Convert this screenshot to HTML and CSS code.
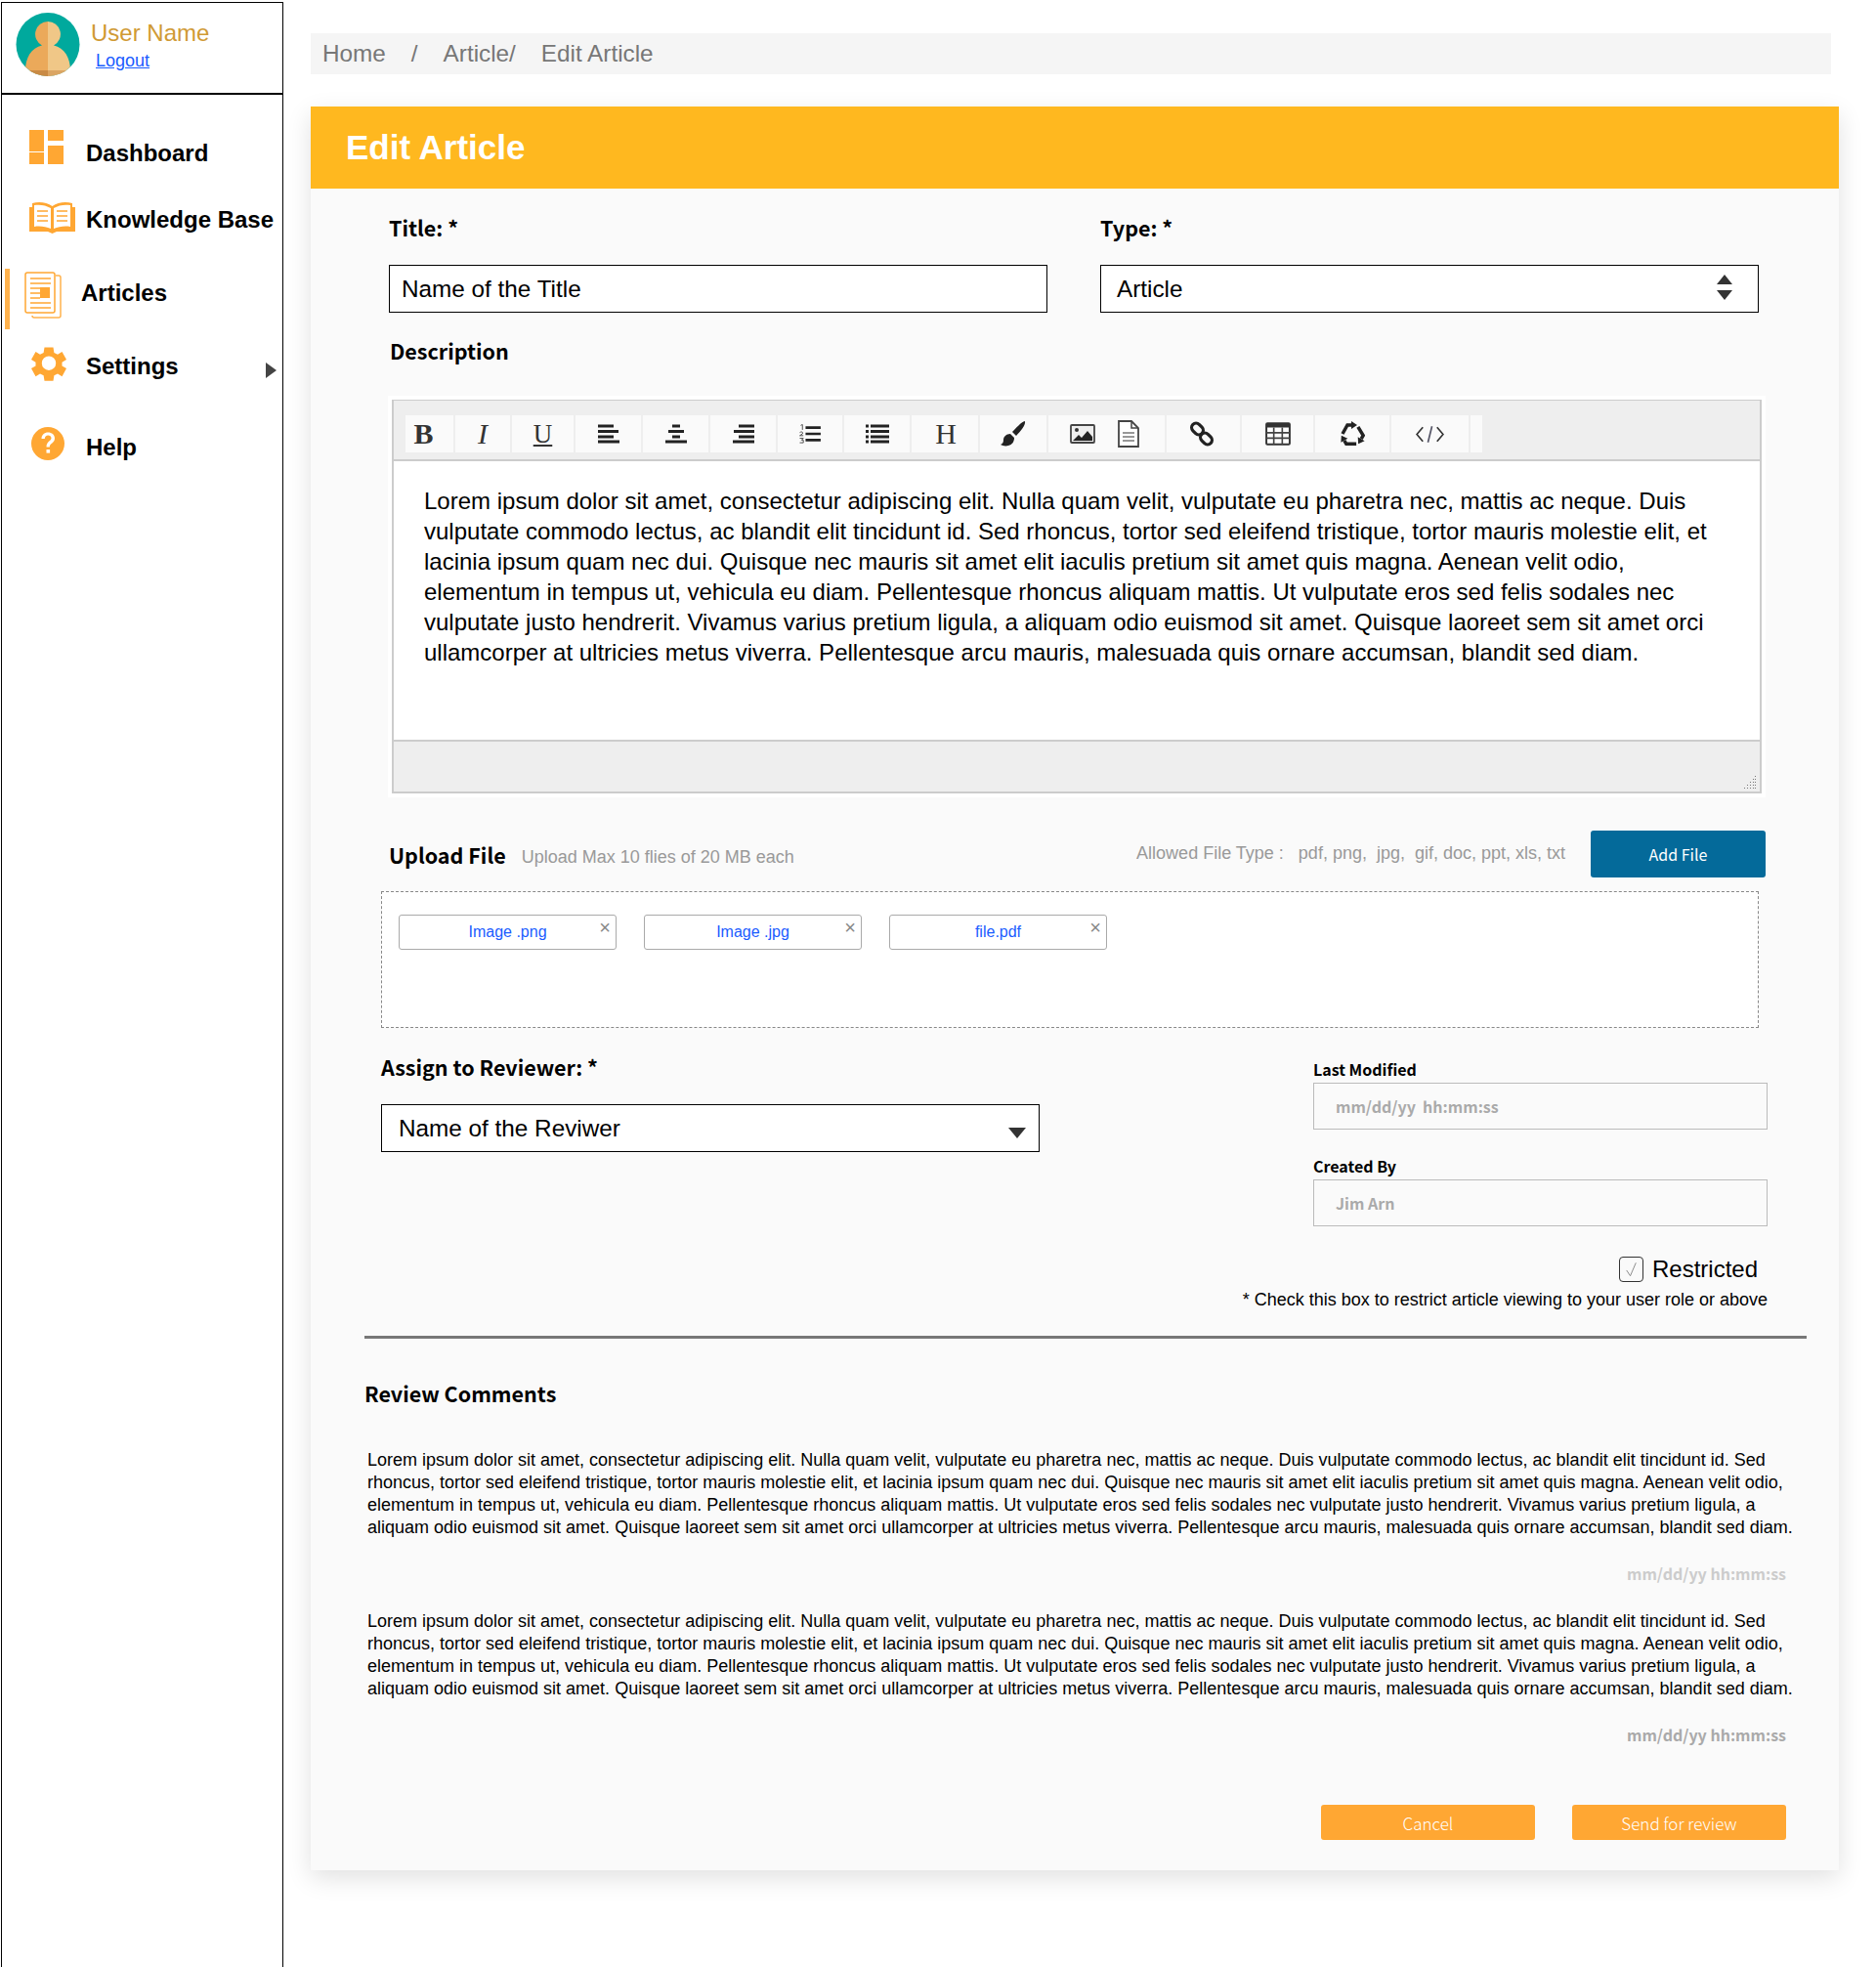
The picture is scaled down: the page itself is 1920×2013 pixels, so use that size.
FILE: index.html
```html
<!DOCTYPE html>
<html lang="en">
<head>
	<meta charset="UTF-8">
	<title>Edit Article</title>
	<link rel="stylesheet" href="styles.css">
</head>
<body>
	<aside class="sidebar">
		<div class="user">
			<svg class="avatar" viewBox="0 0 66 67">
				<defs><clipPath id="round"><circle cx="33" cy="33.5" r="32.5"/></clipPath></defs>
				<g clip-path="url(#round)">
					<rect width="66" height="67" fill="#00a99d"/>
					<path d="M33 10a13 13 0 0 0-6 24.500C16 37 10 47 10 60v7h23z" fill="#eba95a"/>
					<path d="M33 10a13 13 0 0 1 6 24.500C50 37 56 47 56 60v7H33z" fill="#f0c787"/>
					<rect x="8" y="60" width="25" height="7" fill="#c98a45"/>
					<rect x="33" y="60" width="25" height="7" fill="#dba563"/>
				</g>
			</svg>
			<div>
				<div class="user-name">User Name</div>
				<a class="logout" href="#">Logout</a>
			</div>
		</div>
		<nav>
			<a class="nav-item nav-dashboard" href="#">
				<svg class="nav-icon" viewBox="0 0 58 50"><path d="M0 1h15v22H0zM19 1h16v11H19zM19 17h16v19H19zM0 24h15v12H0z" fill="#ffa733"/></svg>
				Dashboard
			</a>
			<a class="nav-item nav-kb" href="#">
				<svg class="nav-icon" viewBox="0 0 58 50">
					<path d="M0 12h3V8c7-2 15-1 20.500 3C29 7 37 6 44 8v4h3v25H28l-4.500 2-4.500-2H0z" fill="#ffa733"/>
					<path d="M5 10c6-1 12 0 17 3v21c-5-2-11-3-17-2zM42 10c-6-1-12 0-17 3v21c5-2 11-3 17-2z" fill="#fff"/>
					<path d="M8 16h11M8 21h11M8 26h11M28 16h11M28 21h11M28 26h11" stroke="#ffa733" stroke-width="1.500"/>
				</svg>
				Knowledge Base
			</a>
			<a class="nav-item nav-articles" href="#">
				<svg class="nav-icon" viewBox="0 0 58 50">
					<path d="M32 7h3a2 2 0 0 1 2 2v39a2 2 0 0 1-2 2H10a2 2 0 0 1-2-2" fill="none" stroke="#ffb24d" stroke-width="1.500"/>
					<rect x="1" y="4" width="30" height="41" rx="2" fill="#fff" stroke="#ffa733" stroke-width="1.500"/>
					<path d="M6 10h21M6 15h21M6 20h10M6 25h10M6 30h10M6 35h21M6 40h21" stroke="#ffa733" stroke-width="1.500"/>
					<rect x="16" y="19" width="10" height="11" fill="#ffa733"/>
				</svg>
				Articles
			</a>
			<a class="nav-item nav-settings" href="#">
				<svg class="nav-icon" viewBox="0 0 58 50">
					<path transform="translate(2 1) scale(.9)" fill="#ffa733" fill-rule="evenodd" d="M15 5h10l1 6 4 2 5-3 5 9-5 3v4l5 3-5 9-5-3-4 2-1 6H15l-1-6-4-2-5 3-5-9 5-3v-4l-5-3 5-9 5 3 4-2zM20 15a8 8 0 1 0 0 16 8 8 0 0 0 0-16z"/>
				</svg>
				Settings
				<span class="nav-arrow"></span>
			</a>
			<a class="nav-item nav-help" href="#">
				<svg class="nav-icon" viewBox="0 0 58 50">
					<circle cx="19" cy="21" r="17" fill="#ffa733"/>
					<path d="M12.500 16c0-4 3-6.500 6.700-6.500s6.800 2.300 6.800 6c0 5-5.200 5-5.200 9h-3.300c0-6 5-6 5-9.200 0-1.600-1.500-2.800-3.300-2.800-1.900 0-3.300 1.200-3.400 3.500z" fill="#fff"/>
					<rect x="17.500" y="27" width="3.600" height="3.600" fill="#fff"/>
				</svg>
				Help
			</a>
		</nav>
	</aside>

	<main class="main">
		<div class="crumbs">
			<span class="crumb-home">Home</span><span class="crumb-sep">/</span><span class="crumb-article">Article/</span><span>Edit Article</span>
		</div>

		<section class="panel">
			<h1 class="panel-title">Edit Article</h1>

			<div class="top-fields">
				<div>
					<label class="label">Title: *</label>
					<div class="field">Name of the Title</div>
				</div>
				<div>
					<label class="label">Type: *</label>
					<div class="field field-type">Article
						<svg class="updown" viewBox="0 0 18 28"><path d="M9 1l8 10H1zM1 17h16l-8 10z" fill="#333"/></svg>
					</div>
				</div>
			</div>

			<label class="label label-desc">Description</label>
			<div class="editor">
				<div class="toolbar">
					<div class="tool tool-glyph tool-b">B</div>
					<div class="tool tool-glyph tool-i">I</div>
					<div class="tool tool-glyph tool-u">U</div>
					<div class="tool"><svg class="ico" viewBox="0 0 24 20"><path d="M1 2h16M1 7.500h21M1 13h16M1 18h22" stroke="#222" stroke-width="3"/></svg></div>
					<div class="tool"><svg class="ico" viewBox="0 0 24 20"><path d="M8 2h8M4 7.500h16M8 13h8M1 18h22" stroke="#222" stroke-width="3"/></svg></div>
					<div class="tool"><svg class="ico" viewBox="0 0 24 20"><path d="M7 2h16M2 7.500h21M7 13h16M1 18h22" stroke="#222" stroke-width="3"/></svg></div>
					<div class="tool"><svg class="ico" viewBox="0 0 24 22"><path d="M7 4h17M7 11h17M7 18h17" stroke="#222" stroke-width="2.800"/><path d="M1.500 1.500l2-1v6M.500 9.500c2-1.500 4-.5 3 1.500l-3 2h4M.500 16h4l-2 2h2v3h-4" fill="none" stroke="#444"/></svg></div>
					<div class="tool"><svg class="ico" viewBox="0 0 24 20"><path d="M5 2h19M5 7.500h19M5 13h19M5 18h19" stroke="#222" stroke-width="3"/><path d="M0 2h3M0 7.500h3M0 13h3M0 18h3" stroke="#222" stroke-width="3"/></svg></div>
					<div class="tool tool-glyph tool-h">H</div>
					<div class="tool"><svg class="ico ico-brush" viewBox="0 0 26 26"><path d="M25 0c1 4-5 11-9 15l-4-4c4-4 9-10 13-11zM10 13l4 4c0 4-2 7-6 8-3 1-6 0-8-1 2-1 3-2 3-5 0-3 3-6 7-6z" fill="#222"/></svg></div>
					<div class="tool tool-pair">
						<svg class="ico ico-image" viewBox="0 0 26 20"><rect x="1" y="1" width="24" height="18" rx="1" fill="#eee" stroke="#444" stroke-width="1.800"/><circle cx="7" cy="6" r="2" fill="#333"/><path d="M3 17l6-6 3 3 6-7 5 6v4z" fill="#222"/></svg>
						<svg class="ico ico-doc" viewBox="0 0 24 28"><path d="M2 1h13l7 7v19H2z" fill="#fff" stroke="#444" stroke-width="1.800"/><path d="M15 1v7h7" fill="none" stroke="#444" stroke-width="1.500"/><path d="M6 13h12M6 17h12M6 21h12" stroke="#777" stroke-width="1.500"/></svg>
					</div>
					<div class="tool tool-link"><svg class="ico ico-large" viewBox="0 0 26 26"><g fill="none" stroke="#222" stroke-width="3.200"><rect x="2" y="3.500" width="13" height="9" rx="4.500" transform="rotate(45 8.500 8)"/><rect x="11" y="13.500" width="13" height="9" rx="4.500" transform="rotate(45 17.500 18)"/></g></svg></div>
					<div class="tool"><svg class="ico ico-table" viewBox="0 0 24 22"><rect x="1" y="1" width="22" height="20" rx="1" fill="#fff" stroke="#333" stroke-width="1.800"/><rect x="1" y="1" width="22" height="4" fill="#333"/><path d="M1 10h22M1 15h22M8 5v16M16 5v16" stroke="#444" stroke-width="1.500"/></svg></div>
					<div class="tool"><svg class="ico ico-large" viewBox="0 0 26 26">
						<g><path d="M3 13l5-9h4" fill="none" stroke="#222" stroke-width="3.500"/><path d="M12 0l6 4-6 4z" fill="#222"/></g>
						<g transform="rotate(120 13 14)"><path d="M3 13l5-9h4" fill="none" stroke="#222" stroke-width="3.500"/><path d="M12 0l6 4-6 4z" fill="#222"/></g>
						<g transform="rotate(240 13 14)"><path d="M3 13l5-9h4" fill="none" stroke="#222" stroke-width="3.500"/><path d="M12 0l6 4-6 4z" fill="#222"/></g>
					</svg></div>
					<div class="tool"><svg class="ico ico-code" viewBox="0 0 28 18"><path d="M7 2L1 9l6 7M21 2l6 7-6 7" fill="none" stroke="#333" stroke-width="1.600"/><path d="M16 1l-4 16" stroke="#556" stroke-width="1.600"/></svg></div>
					<div class="tool"></div>
				</div>
				<div class="editor-body">
					Lorem ipsum dolor sit amet, consectetur adipiscing elit. Nulla quam velit, vulputate eu pharetra nec, mattis ac neque. Duis<br>
					vulputate commodo lectus, ac blandit elit tincidunt id. Sed rhoncus, tortor sed eleifend tristique, tortor mauris molestie elit, et<br>
					lacinia ipsum quam nec dui. Quisque nec mauris sit amet elit iaculis pretium sit amet quis magna. Aenean velit odio,<br>
					elementum in tempus ut, vehicula eu diam. Pellentesque rhoncus aliquam mattis. Ut vulputate eros sed felis sodales nec<br>
					vulputate justo hendrerit. Vivamus varius pretium ligula, a aliquam odio euismod sit amet. Quisque laoreet sem sit amet orci<br>
					ullamcorper at ultricies metus viverra. Pellentesque arcu mauris, malesuada quis ornare accumsan, blandit sed diam.
				</div>
				<div class="editor-foot">
					<svg class="grip" viewBox="0 0 14 14"><path d="M12 1h1v1h-1zM10 4h1v1h-1zM12 4h1v1h-1zM7 7h1v1H7zM10 7h1v1h-1zM12 7h1v1h-1zM4 10h1v1H4zM7 10h1v1H7zM10 10h1v1h-1zM12 10h1v1h-1zM1 13h1v1H1zM4 13h1v1H4zM7 13h1v1H7zM10 13h1v1h-1zM12 13h1v1h-1z" fill="#777"/></svg>
				</div>
			</div>

			<div class="upload-row">
				<span class="upload-title">Upload File</span>
				<span class="upload-hint">Upload Max 10 flies of 20 MB each</span>
				<span class="upload-types">Allowed File Type :&nbsp;&nbsp; pdf, png,&nbsp; jpg,&nbsp; gif, doc, ppt, xls, txt</span>
				<button class="btn-add">Add File</button>
			</div>

			<div class="dropzone">
				<div class="chip">Image .png<span class="chip-x">×</span></div>
				<div class="chip">Image .jpg<span class="chip-x">×</span></div>
				<div class="chip">file.pdf<span class="chip-x">×</span></div>
			</div>

			<div class="assign-row">
				<div class="assign-col">
					<label class="label">Assign to Reviewer: *</label>
					<div class="field field-reviewer">Name of the Reviwer<span class="caret"></span></div>
				</div>
				<div class="meta-col">
					<label class="meta-label">Last Modified</label>
					<div class="meta-field">mm/dd/yy&nbsp; hh:mm:ss</div>
					<label class="meta-label meta-label-2">Created By</label>
					<div class="meta-field">Jim Arn</div>
					<div class="restricted">
						<span class="check"><svg viewBox="0 0 24 24"><path d="M7 13l4 6 6-14" fill="none" stroke="#888" stroke-width="1"/></svg></span>
						Restricted
					</div>
					<p class="restricted-note">* Check this box to restrict article viewing to your user role or above</p>
				</div>
			</div>

			<hr class="rule">

			<h2 class="review-title">Review Comments</h2>
			<p class="comment">
				Lorem ipsum dolor sit amet, consectetur adipiscing elit. Nulla quam velit, vulputate eu pharetra nec, mattis ac neque. Duis vulputate commodo lectus, ac blandit elit tincidunt id. Sed<br>
				rhoncus, tortor sed eleifend tristique, tortor mauris molestie elit, et lacinia ipsum quam nec dui. Quisque nec mauris sit amet elit iaculis pretium sit amet quis magna. Aenean velit odio,<br>
				elementum in tempus ut, vehicula eu diam. Pellentesque rhoncus aliquam mattis. Ut vulputate eros sed felis sodales nec vulputate justo hendrerit. Vivamus varius pretium ligula, a<br>
				aliquam odio euismod sit amet. Quisque laoreet sem sit amet orci ullamcorper at ultricies metus viverra. Pellentesque arcu mauris, malesuada quis ornare accumsan, blandit sed diam.
			</p>
			<div class="stamp stamp-light">mm/dd/yy hh:mm:ss</div>
			<p class="comment comment-2">
				Lorem ipsum dolor sit amet, consectetur adipiscing elit. Nulla quam velit, vulputate eu pharetra nec, mattis ac neque. Duis vulputate commodo lectus, ac blandit elit tincidunt id. Sed<br>
				rhoncus, tortor sed eleifend tristique, tortor mauris molestie elit, et lacinia ipsum quam nec dui. Quisque nec mauris sit amet elit iaculis pretium sit amet quis magna. Aenean velit odio,<br>
				elementum in tempus ut, vehicula eu diam. Pellentesque rhoncus aliquam mattis. Ut vulputate eros sed felis sodales nec vulputate justo hendrerit. Vivamus varius pretium ligula, a<br>
				aliquam odio euismod sit amet. Quisque laoreet sem sit amet orci ullamcorper at ultricies metus viverra. Pellentesque arcu mauris, malesuada quis ornare accumsan, blandit sed diam.
			</p>
			<div class="stamp">mm/dd/yy hh:mm:ss</div>

			<div class="actions">
				<button class="btn-orange">Cancel</button>
				<button class="btn-orange">Send for review</button>
			</div>
		</section>
	</main>
</body>
</html>
```

FILE: styles.css
```css
*{
	margin:0;
	padding:0;
	box-sizing:border-box;
}
body{
	display:flex;
	height:2013px;
	background:#fff;
	font-family:"Liberation Sans",Arial,sans-serif;
	color:#000;
	overflow:hidden;
}

/* sidebar */
.sidebar{
	width:289px;
	margin:2px 0 0 1px;
	border:1px solid #000;
	border-bottom:0;
	flex:none;
}
.user{
	display:flex;
	height:94px;
	padding:9px 0 0 14px;
	border-bottom:2px solid #000;
	gap:11px;
}
.avatar{
	width:66px;
	height:67px;
}
.user-name{
	margin-top:8px;
	font-size:24px;
	line-height:28px;
	color:#d09a35;
}
.logout{
	display:block;
	margin:3px 0 0 5px;
	font-size:18px;
	line-height:22px;
	color:#1a5cff;
}
.nav-item{
	display:flex;
	align-items:center;
	height:50px;
	padding-left:28px;
	font-size:24px;
	font-weight:bold;
	color:#000;
	text-decoration:none;
}
.nav-icon{
	width:58px;
	height:50px;
	flex:none;
	overflow:visible;
}
.nav-dashboard{margin-top:35px;}
.nav-kb{margin-top:18px;}
.nav-articles{
	height:62px;
	margin:25px 0 0 3px;
	padding:0 0 12px 15px;
	border-left:5px solid #ffb24d;
}
.nav-settings{margin-top:13px;}
.nav-help{margin-top:33px;}
.nav-arrow{
	margin:8px 6px 0 auto;
	border-left:11px solid #444;
	border-top:8px solid transparent;
	border-bottom:8px solid transparent;
}

/* main */
.main{
	width:1564px;
	margin-left:28px;
	padding-top:34px;
	flex:none;
}
.crumbs{
	display:flex;
	width:1556px;
	height:42px;
	padding-left:12px;
	align-items:center;
	background:#f5f5f5;
	font-size:24.300px;
	color:#777;
}
.crumb-home{margin-right:26px;}
.crumb-sep{margin-right:26px;}
.crumb-article{margin-right:26px;}
.panel{
	margin-top:33px;
	padding-bottom:31px;
	background:#fafafa;
	box-shadow:0 8px 24px rgba(0,0,0,.12);
}
.panel-title{
	height:84px;
	padding-left:36px;
	background:#ffb81f;
	color:#fff;
	font-size:35px;
	line-height:84px;
	font-weight:bold;
}
.label{
	display:block;
	font-family:"Noto Sans CJK SC","Noto Sans",sans-serif;
	font-size:21.500px;
	line-height:24px;
	font-weight:bold;
}
.top-fields{
	display:grid;
	grid-template-columns:674px 674px;
	column-gap:54px;
	padding:28px 0 0 80px;
}
.field{
	position:relative;
	height:49px;
	margin-top:26px;
	padding-left:12px;
	border:1px solid #000;
	background:#fff;
	font-size:24.300px;
	line-height:47px;
}
.field-type{padding-left:16px;}
.updown{
	position:absolute;
	right:25px;
	top:8px;
	width:18px;
	height:28px;
}
.label-desc{
	margin:27px 0 0 81px;
}

/* editor */
.editor{
	width:1402px;
	height:403px;
	margin:38px 0 0 83px;
	border:2px solid #ccc;
	border-top:1px solid #ccc;
	background:#fff;
	outline:4px solid #fff;
	display:flex;
	flex-direction:column;
}
.toolbar{
	display:grid;
	grid-template-columns:49px 56px 63px 67px 67px 67px 66px 67px 68px 68px 119px 75px 73px 76px 79px 12px;
	gap:2px;
	height:62px;
	padding:15px 0 7px 12px;
	background:#eee;
	border-bottom:2px solid #ccc;
	flex:none;
}
.tool{
	display:flex;
	align-items:center;
	justify-content:center;
	background:#fafafa;
}
.tool-glyph{
	font-family:"Liberation Serif",serif;
	font-size:30px;
	color:#333;
}
.tool-b{font-weight:bold;padding-right:12px;}
.tool-i{font-style:italic;}
.tool-u{text-decoration:underline;font-size:27px;}
.tool-h{padding-left:2px;}
.tool-link{padding-right:3px;}
.ico{
	width:24px;
	height:20px;
}
.ico-brush{width:26px;height:26px;}
.ico-large{width:26px;height:26px;}
.ico-table{width:26px;height:24px;}
.ico-code{width:29px;height:19px;}
.tool-pair{gap:22px;padding-right:4px;}
.ico-image{width:26px;height:20px;}
.ico-doc{width:24px;height:28px;}
.editor-body{
	height:285px;
	padding:25px 0 0 31px;
	font-size:24px;
	line-height:31px;
	white-space:nowrap;
	flex:none;
}
.editor-foot{
	position:relative;
	flex:1;
	background:#eee;
	border-top:2px solid #ccc;
}
.grip{
	position:absolute;
	right:3px;
	bottom:3px;
	width:14px;
	height:14px;
}

/* upload */
.upload-row{
	display:flex;
	align-items:center;
	width:1409px;
	height:48px;
	margin:38px 0 0 80px;
}
.upload-title{
	font-family:"Noto Sans CJK SC","Noto Sans",sans-serif;
	font-size:21.500px;
	font-weight:bold;
}
.upload-hint{
	margin:7px 0 0 16px;
	font-size:18px;
	color:#999;
}
.upload-types{
	margin:-2px 26px 0 auto;
	font-size:18px;
	color:#999;
}
.btn-add{
	width:179px;
	height:48px;
	border:0;
	border-radius:3px;
	background:#046a9a;
	color:#fff;
	font-family:"Noto Sans CJK SC","Noto Sans",sans-serif;
	font-size:16px;
}
.dropzone{
	display:flex;
	gap:28px;
	width:1410px;
	height:140px;
	margin:14px 0 0 72px;
	padding:23px 0 0 17px;
	border:1px dashed #888;
	background:#fff;
}
.chip{
	position:relative;
	width:223px;
	height:36px;
	border:1px solid #aaa;
	border-radius:3px;
	color:#1a5cff;
	font-size:16px;
	line-height:34px;
	text-align:center;
}
.chip-x{
	position:absolute;
	right:5px;
	top:-5px;
	color:#888;
	font-size:20px;
}

/* reviewer + meta */
.assign-row{
	display:flex;
	justify-content:space-between;
	width:1419px;
	margin:28px 0 0 72px;
}
.assign-col{width:674px;}
.field-reviewer{
	margin-top:26px;
	padding-left:17px;
}
.caret{
	position:absolute;
	right:13px;
	top:23px;
	border-top:11px solid #333;
	border-left:9px solid transparent;
	border-right:9px solid transparent;
}
.meta-col{
	width:465px;
	padding-top:4px;
}
.meta-label{
	display:block;
	font-family:"Noto Sans CJK SC","Noto Sans",sans-serif;
	font-size:16px;
	line-height:20px;
	font-weight:bold;
}
.meta-label-2{margin-top:27px;}
.meta-field{
	height:48px;
	margin-top:4px;
	padding-left:22px;
	border:1px solid #bbb;
	font-family:"Noto Sans CJK SC","Noto Sans",sans-serif;
	font-size:16px;
	line-height:46px;
	font-weight:bold;
	color:#aaa;
}
.restricted{
	display:flex;
	align-items:center;
	justify-content:flex-end;
	gap:9px;
	height:30px;
	margin-top:29px;
	padding-right:10px;
	font-size:24px;
}
.check{
	width:25px;
	height:26px;
	border:1px solid #333;
	border-radius:4px;
}
.check svg{
	display:block;
	width:100%;
	height:100%;
}
.restricted-note{
	margin:6px 0 0 -100px;
	font-size:18px;
	line-height:20px;
	text-align:right;
}

/* comments */
.rule{
	width:1476px;
	height:3px;
	margin:27px 0 0 55px;
	border:0;
	background:#777;
}
.review-title{
	margin:44px 0 0 55px;
	font-family:"Noto Sans CJK SC","Noto Sans",sans-serif;
	font-size:21.500px;
	line-height:24px;
	font-weight:bold;
}
.comment{
	margin:45px 0 0 58px;
	font-size:18px;
	line-height:23px;
	white-space:nowrap;
}
.comment-2{margin-top:28px;}
.stamp{
	margin:25px 54px 0 0;
	font-family:"Noto Sans CJK SC","Noto Sans",sans-serif;
	font-size:16px;
	line-height:20px;
	font-weight:bold;
	color:#aaa;
	text-align:right;
}
.stamp-light{color:#ccc;}
.actions{
	display:flex;
	justify-content:flex-end;
	gap:38px;
	margin:62px 54px 0 0;
}
.btn-orange{
	width:219px;
	height:36px;
	border:0;
	border-radius:3px;
	background:#ffa733;
	color:#fff;
	font-family:"Noto Sans CJK SC","Noto Sans",sans-serif;
	font-size:17px;
	font-weight:300;
}
```
